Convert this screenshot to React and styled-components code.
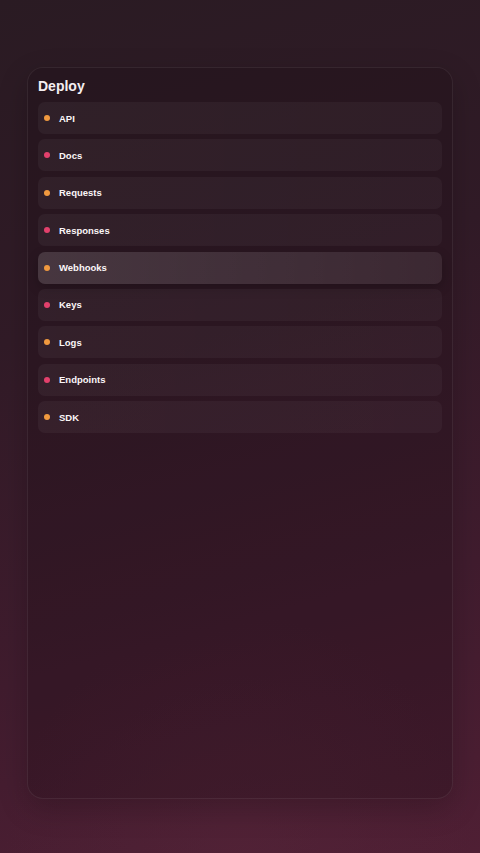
import React from 'react';
import styled, { createGlobalStyle } from 'styled-components';

const Global = createGlobalStyle`
  html, body { margin: 0; padding: 0; }
  body {
    font-family: "Liberation Sans", Arial, sans-serif;
    background: #2c1b24;
  }
`;

const Page = styled.div`
  min-height: 853px;
  box-sizing: border-box;
  padding: 67px 27px 54px;
  display: flex;
  background:
    radial-gradient(ellipse 70% 40% at 50% 100%, rgba(90, 40, 60, 0.35), transparent 70%),
    linear-gradient(165deg, #2a1b23 0%, #311b27 35%, #401c2e 70%, #4f1f34 100%);
`;

const Panel = styled.section`
  flex: 1;
  box-sizing: border-box;
  height: 732px;
  padding: 10px 10px;
  border-radius: 16px;
  border: 1px solid rgba(255, 255, 255, 0.07);
  background: rgba(24, 10, 18, 0.28);
  box-shadow: 0 10px 30px rgba(0, 0, 0, 0.2);
  display: flex;
  flex-direction: column;
`;

const Title = styled.h2`
  margin: 0 0 8px;
  color: #f4eef1;
  font-size: 14px;
  font-weight: 700;
  line-height: 16px;
`;

const List = styled.ul`
  list-style: none;
  margin: 0;
  padding: 0;
  display: flex;
  flex-direction: column;
  gap: 5.4px;
`;

const Row = styled.li`
  height: 32px;
  border-radius: 7px;
  padding-left: 6px;
  display: flex;
  align-items: center;
  gap: 9px;
  background: ${p => p.$active
    ? 'linear-gradient(90deg, rgba(255,255,255,0.14), rgba(255,255,255,0.08))'
    : 'linear-gradient(90deg, rgba(255,255,255,0.045), rgba(255,255,255,0.035))'};
  box-shadow: ${p => p.$active ? '0 4px 12px rgba(0,0,0,0.2)' : 'none'};
`;

const Dot = styled.span`
  width: 6px;
  height: 6px;
  border-radius: 50%;
  background: ${p => p.$tone === 'pink' ? '#e2406c' : '#f0993f'};
`;

const Label = styled.span`
  color: #fbf6f8;
  font-size: 9.5px;
  font-weight: 700;
`;

const items = [
  ['API', 'orange'],
  ['Docs', 'pink'],
  ['Requests', 'orange'],
  ['Responses', 'pink'],
  ['Webhooks', 'orange', true],
  ['Keys', 'pink'],
  ['Logs', 'orange'],
  ['Endpoints', 'pink'],
  ['SDK', 'orange'],
];

export default function App() {
  return (
    <>
      <Global />
      <Page>
        <Panel>
          <Title>Deploy</Title>
          <List>
            {items.map(([name, tone, active]) => (
              <Row key={name} $active={active}>
                <Dot $tone={tone} />
                <Label>{name}</Label>
              </Row>
            ))}
          </List>
        </Panel>
      </Page>
    </>
  );
}
